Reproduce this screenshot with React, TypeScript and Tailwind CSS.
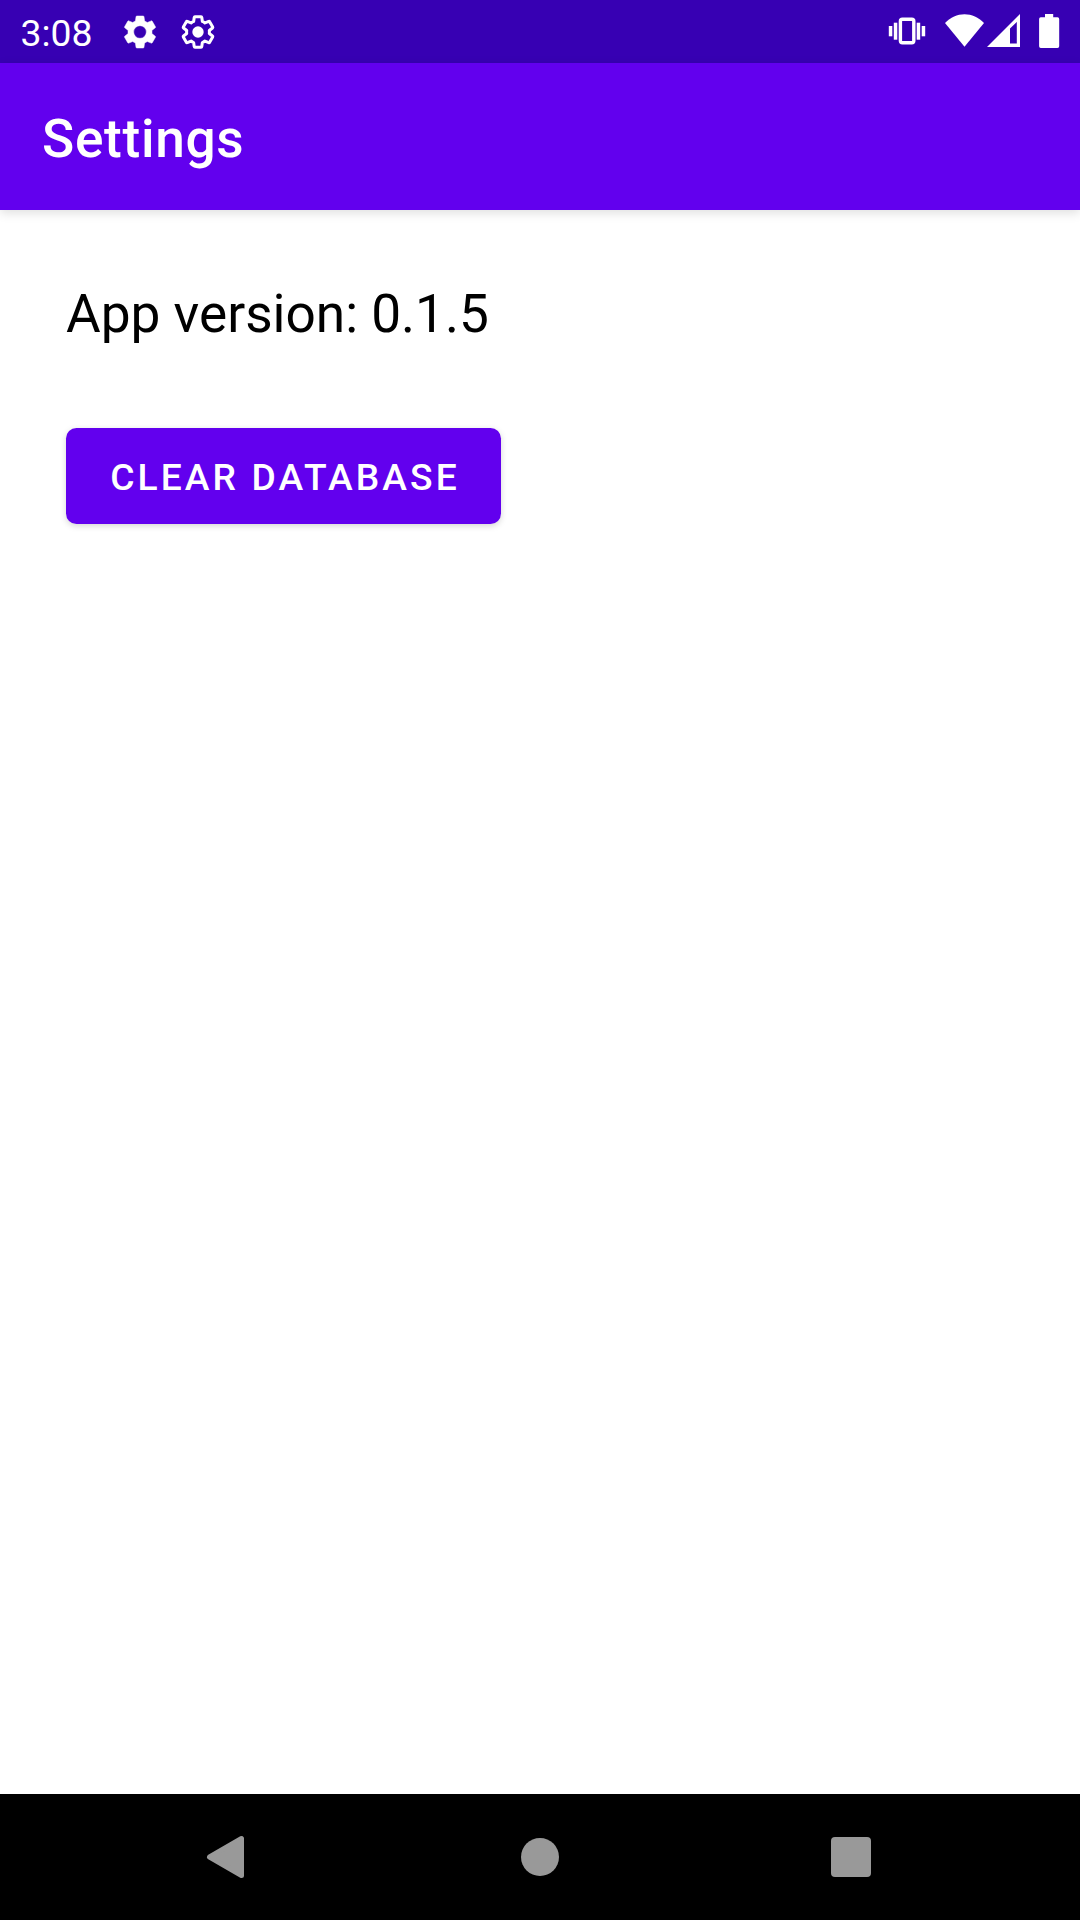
const GEAR =
  'M19.14 12.94c.04-.3.06-.61.06-.94 0-.32-.02-.64-.07-.94l2.03-1.58c.18-.14.23-.41.12-.61l-1.92-3.32c-.12-.22-.37-.29-.59-.22l-2.39.96c-.5-.38-1.03-.7-1.62-.94l-.36-2.54c-.04-.24-.24-.41-.48-.41h-3.84c-.24 0-.43.17-.47.41l-.36 2.54c-.59.24-1.13.57-1.62.94l-2.39-.96c-.22-.08-.47 0-.59.22L2.74 8.87c-.12.21-.08.47.12.61l2.03 1.58c-.05.3-.09.63-.09.94s.02.64.07.94l-2.03 1.58c-.18.14-.23.41-.12.61l1.92 3.32c.12.22.37.29.59.22l2.39-.96c.5.38 1.03.7 1.62.94l.36 2.54c.05.24.24.41.48.41h3.84c.24 0 .44-.17.47-.41l.36-2.54c.59-.24 1.13-.56 1.62-.94l2.39.96c.22.08.47 0 .59-.22l1.92-3.32c.12-.22.07-.47-.12-.61l-2.01-1.58z';

function StatusBar() {
  return (
    <div className="flex h-[63px] shrink-0 items-center justify-between bg-[#3700b3] text-white">
      <div className="flex items-center pl-[20.5px]">
        <span className="w-[99px] pt-[4px] text-[37.3px] leading-[43px]">3:08</span>
        {/* filled gear */}
        <svg className="size-[40px]" viewBox="0 0 24 24" fill="currentColor">
          <path
            fillRule="evenodd"
            stroke="currentColor"
            strokeWidth="0.3"
            d={GEAR + 'M12 15.8a3.8 3.8 0 1 1 0-7.6 3.8 3.8 0 0 1 0 7.6z'}
          />
        </svg>
        {/* outlined gear */}
        <svg className="ml-[18px] size-[40px]" viewBox="0 0 24 24" fill="currentColor">
          <path
            d={GEAR}
            fill="none"
            stroke="currentColor"
            strokeWidth="1.9"
            strokeLinejoin="round"
            transform="translate(12 12) scale(.95) translate(-12 -12)"
          />
          <circle cx="12" cy="12" r="3.4" />
        </svg>
      </div>
      <div className="flex h-full items-start">
        {/* vibrate */}
        <svg className="h-[63px] w-[38px]" viewBox="888 0 38 63" fill="currentColor">
          <rect x="900.4" y="19.2" width="13.4" height="23.6" rx="2" fill="none" stroke="currentColor" strokeWidth="3.4" />
          <rect x="893.8" y="22.7" width="3.5" height="17" />
          <rect x="888.8" y="26" width="3.5" height="10.3" />
          <rect x="916.7" y="22.7" width="3.5" height="17" />
          <rect x="921.7" y="26" width="3.5" height="10.3" />
        </svg>
        {/* wifi */}
        <svg className="ml-[19px] h-[63px] w-[40px]" viewBox="945 0 40 63" fill="currentColor">
          <path d="M964.5 46.7 945 23.1C950.6 17.3 957.2 14.2 964.5 14.2s13.9 3.1 19.5 8.9z" />
        </svg>
        {/* cell signal */}
        <svg className="ml-[2px] h-[63px] w-[33px]" viewBox="987 0 33 63" fill="currentColor">
          <path fillRule="evenodd" d="M987 47 1020 14V47zM1010 28.5V43.5H1016.8V22z" />
        </svg>
        {/* battery */}
        <svg className="mr-[20px] ml-[18px] h-[63px] w-[22px]" viewBox="1038 0 22 63" fill="currentColor">
          <path d="M1045 14h8.2v3.3h4.3a1.7 1.7 0 0 1 1.7 1.7v27.3a1.7 1.7 0 0 1-1.7 1.7h-16.7a1.7 1.7 0 0 1-1.7-1.7V19a1.7 1.7 0 0 1 1.7-1.7h4.2z" />
        </svg>
      </div>
    </div>
  );
}

function NavigationBar() {
  return (
    <div className="flex h-[126px] shrink-0 items-center justify-between bg-black pr-[209px] pl-[206px] text-[#999999]">
      <svg className="h-[44px] w-[39px]" viewBox="206 1835 39 44" fill="currentColor">
        <path
          d="M209.5 1857 241.5 1838.5V1875.5z"
          stroke="currentColor"
          strokeWidth="5"
          strokeLinejoin="round"
        />
      </svg>
      <div className="ml-[3px] size-[38px] rounded-full bg-[#999999]" />
      <div className="size-[40px] rounded-[4px] bg-[#999999]" />
    </div>
  );
}

export default function App() {
  return (
    <div className="flex h-[1920px] w-[1080px] flex-col overflow-hidden bg-white font-['Roboto',sans-serif]">
      <StatusBar />
      <header className="z-10 flex h-[147px] shrink-0 items-center bg-[#6200ee] pl-[42px] shadow-[0_3px_10px_rgba(0,0,0,0.13)]">
        <h1 className="pt-[4px] text-[53.2px] leading-[62px] font-medium tracking-[0.7px] text-white">Settings</h1>
      </header>
      <main className="flex flex-1 flex-col items-start px-[66px] pt-[73px]">
        <p className="text-[53.2px] leading-[62px] tracking-[-0.02px] text-black">App version: 0.1.5</p>
        <button className="mt-[83px] h-[96px] w-[435px] rounded-[10.5px] bg-[#6200ee] pt-[2px] pl-[3px] text-[37.2px] leading-[43px] font-medium tracking-[3.1px] text-white shadow-[0_2px_6px_rgba(0,0,0,0.17)]">
          CLEAR DATABASE
        </button>
      </main>
      <NavigationBar />
    </div>
  );
}
